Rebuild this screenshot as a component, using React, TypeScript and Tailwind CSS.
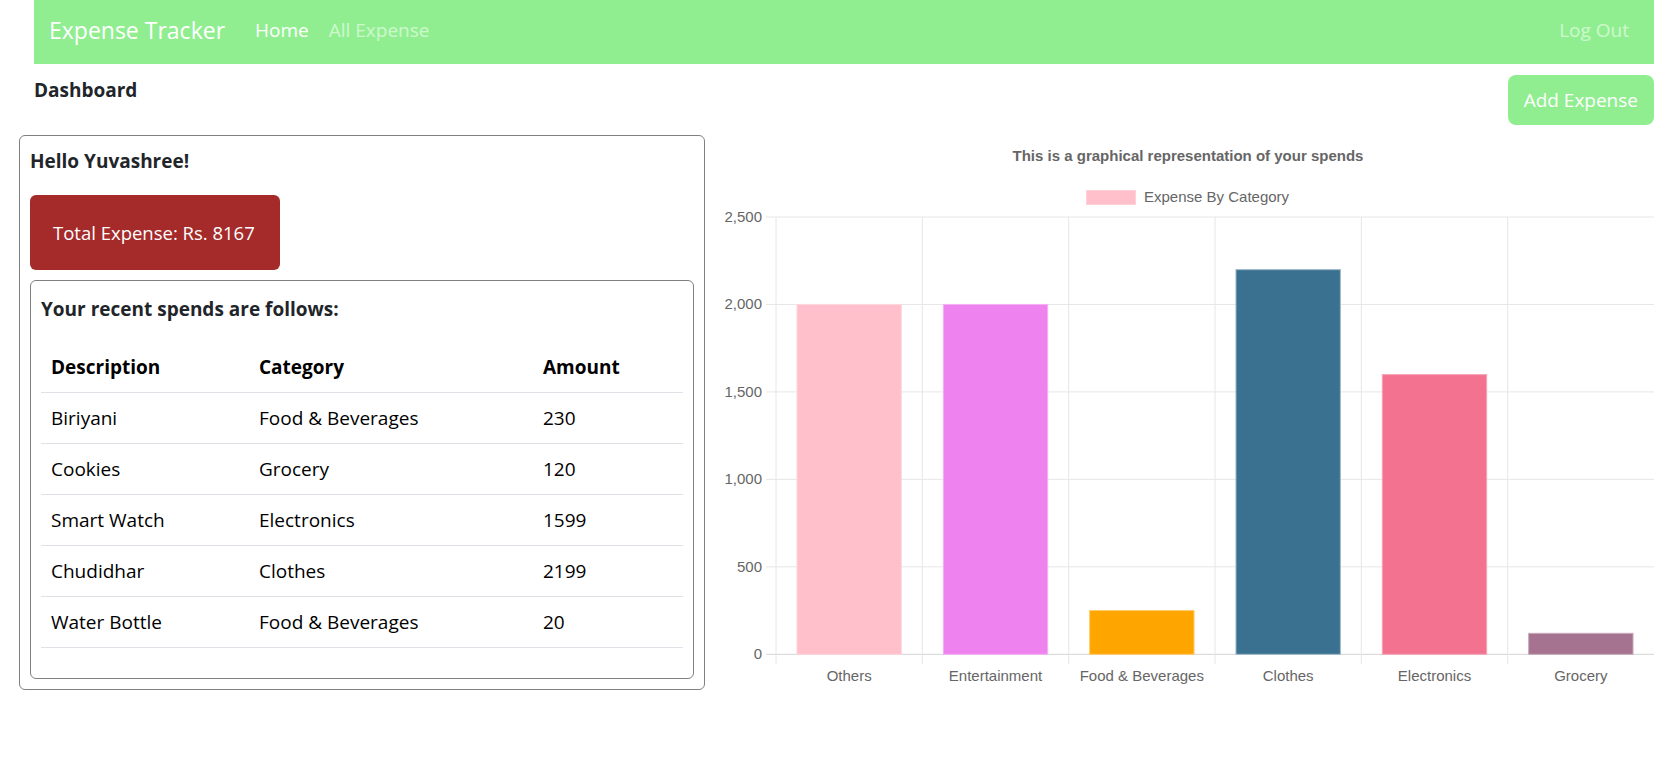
import React from 'react';

const expenses = [
  { description: 'Biriyani', category: 'Food & Beverages', amount: 230 },
  { description: 'Cookies', category: 'Grocery', amount: 120 },
  { description: 'Smart Watch', category: 'Electronics', amount: 1599 },
  { description: 'Chudidhar', category: 'Clothes', amount: 2199 },
  { description: 'Water Bottle', category: 'Food & Beverages', amount: 20 },
];

const chartData = [
  { label: 'Others', value: 2000, fill: '#ffc0cb', stroke: '#ffd6dd' },
  { label: 'Entertainment', value: 2000, fill: '#ee82ee', stroke: '#f5b0f5' },
  { label: 'Food & Beverages', value: 250, fill: '#ffa500', stroke: '#ffc966' },
  { label: 'Clothes', value: 2199, fill: '#3a7191', stroke: '#9db8c8' },
  { label: 'Electronics', value: 1599, fill: '#f2728f', stroke: '#f7a4b6' },
  { label: 'Grocery', value: 120, fill: '#a5728f', stroke: '#c9a9bb' },
];

function ExpenseChart() {
  const left = 61;
  const right = 939;
  const top = 82;
  const zero = 519.3;
  const perUnit = (zero - top) / 2500;
  const catWidth = (right - left) / chartData.length;
  const barWidth = catWidth * 0.72;
  const ticks = [2500, 2000, 1500, 1000, 500, 0];
  const font = "'Liberation Sans', Arial, sans-serif";

  return (
    <svg width={939} height={560} className="block">
      <text x={473} y={26} textAnchor="middle" fontFamily={font} fontSize={15} fontWeight={700} fill="#666">
        This is a graphical representation of your spends
      </text>
      <rect x={371.5} y={55.5} width={49} height={14} fill="#ffc0cb" stroke="#ffd0d8" />
      <text x={429} y={67} fontFamily={font} fontSize={15} fill="#666">
        Expense By Category
      </text>

      {ticks.map((t) => {
        const y = zero - t * perUnit;
        return (
          <g key={t}>
            <line
              x1={51}
              x2={right}
              y1={y}
              y2={y}
              stroke={t === 0 ? '#d4d4d4' : '#e6e6e6'}
              strokeWidth={1}
            />
            <text x={47} y={y + 5} textAnchor="end" fontFamily={font} fontSize={15} fill="#666">
              {t.toLocaleString('en-US')}
            </text>
          </g>
        );
      })}

      {chartData.map((_, i) => (
        <line
          key={i}
          x1={left + i * catWidth}
          x2={left + i * catWidth}
          y1={top}
          y2={529}
          stroke="#e6e6e6"
          strokeWidth={1}
        />
      ))}

      {chartData.map((d, i) => {
        const h = d.value * perUnit;
        const x = left + i * catWidth + (catWidth - barWidth) / 2;
        return (
          <g key={d.label}>
            <rect
              x={x + 0.5}
              y={zero - h}
              width={barWidth - 1}
              height={h}
              fill={d.fill}
              stroke={d.stroke}
              strokeWidth={1}
            />
            <text
              x={left + i * catWidth + catWidth / 2}
              y={546}
              textAnchor="middle"
              fontFamily={font}
              fontSize={15}
              fill="#666"
            >
              {d.label}
            </text>
          </g>
        );
      })}
    </svg>
  );
}

export default function App() {
  return (
    <div className="min-h-screen bg-white text-[#212529] text-[19px] leading-[30px] font-['Segoe_UI','Open_Sans',sans-serif]">
      <nav className="ml-[34px] mr-[22px] h-[64px] bg-[#90ee90] flex items-center pl-[15px] pr-[25px] pb-[4px]">
        <span className="text-[23px] text-white mr-[30px]">Expense Tracker</span>
        <a className="text-white mr-[20px]">Home</a>
        <a className="text-white/55">All Expense</a>
        <a className="ml-auto text-white/55">Log Out</a>
      </nav>

      <div className="ml-[34px] mr-[22px] mt-[11px] flex items-start justify-between">
        <h3 className="font-bold">Dashboard</h3>
        <button className="h-[50px] px-[16px] rounded-[8px] bg-[#90ee90] text-white">Add Expense</button>
      </div>

      <div className="mt-[10px] flex items-start">
        <div className="ml-[19px] w-[686px] border border-[#808080] rounded-[6px] p-[10px]">
          <h4 className="font-bold">Hello Yuvashree!</h4>
          <div className="mt-[19px] w-[250px] h-[75px] rounded-[6px] bg-[#a52a2a] text-white flex items-center pl-[23px] text-[18.5px]">
            Total Expense: Rs. 8167
          </div>
          <div className="mt-[10px] border border-[#808080] rounded-[6px] px-[10px] pt-[13px] pb-[30px]">
            <h4 className="font-bold">Your recent spends are follows:</h4>
            <table className="mt-[18px] w-full border-collapse text-left">
              <thead>
                <tr className="border-b border-[#dee2e6]">
                  <th className="w-[208px] px-[10px] py-[10px] font-bold text-black">Description</th>
                  <th className="w-[284px] px-[10px] py-[10px] font-bold text-black">Category</th>
                  <th className="px-[10px] py-[10px] font-bold text-black">Amount</th>
                </tr>
              </thead>
              <tbody>
                {expenses.map((e) => (
                  <tr key={e.description} className="border-b border-[#dee2e6]">
                    <td className="px-[10px] py-[10px] text-black">{e.description}</td>
                    <td className="px-[10px] py-[10px] text-black">{e.category}</td>
                    <td className="px-[10px] py-[10px] text-black">{e.amount}</td>
                  </tr>
                ))}
              </tbody>
            </table>
          </div>
        </div>

        <div className="ml-[10px]">
          <ExpenseChart />
        </div>
      </div>
    </div>
  );
}
